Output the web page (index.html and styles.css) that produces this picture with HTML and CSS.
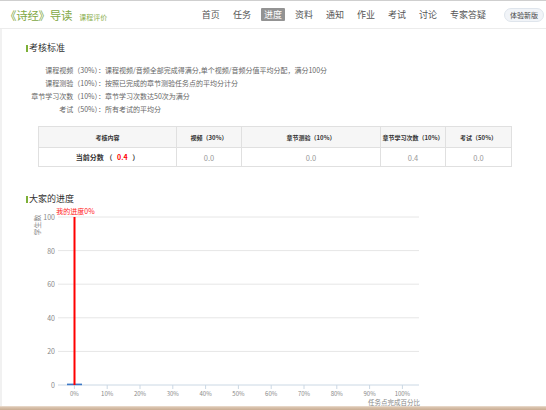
FILE: index.html
```html
<!DOCTYPE html>
<html lang="zh-CN">
<head>
<meta charset="utf-8">
<title>《诗经》导读 - 课程评价</title>
<link rel="stylesheet" href="styles.css">
</head>
<body>
<header class="topbar">
  <div class="brand">
    <span class="brand-title">《诗经》导读</span>
    <span class="brand-sub">课程评价</span>
  </div>
  <nav class="nav">
    <a class="nav-item">首页</a>
    <a class="nav-item">任务</a>
    <a class="nav-item active">进度</a>
    <a class="nav-item">资料</a>
    <a class="nav-item">通知</a>
    <a class="nav-item">作业</a>
    <a class="nav-item">考试</a>
    <a class="nav-item">讨论</a>
    <a class="nav-item">专家答疑</a>
    <span class="pill">体验新版</span>
  </nav>
</header>

<main class="panel">
  <section class="block">
    <h2 class="sec-title">考核标准</h2>
    <div class="rules">
      <span class="rule-label">课程视频（30%）：</span><span class="rule-text">课程视频/音频全部完成得满分,单个视频/音频分值平均分配，满分100分</span>
      <span class="rule-label">课程测验（10%）：</span><span class="rule-text">按照已完成的章节测验任务点的平均分计分</span>
      <span class="rule-label">章节学习次数（10%）：</span><span class="rule-text">章节学习次数达50次为满分</span>
      <span class="rule-label">考试（50%）：</span><span class="rule-text">所有考试的平均分</span>
    </div>
    <table class="score">
      <colgroup>
        <col class="c1"><col class="c2"><col class="c3"><col class="c4"><col class="c5">
      </colgroup>
      <thead>
        <tr><th>考核内容</th><th>视频（30%）</th><th>章节测验（10%）</th><th>章节学习次数（10%）</th><th>考试（50%）</th></tr>
      </thead>
      <tbody>
        <tr><td class="cur">当前分数 （ <em>0.4</em> ）</td><td>0.0</td><td>0.0</td><td>0.4</td><td>0.0</td></tr>
      </tbody>
    </table>
  </section>

  <section class="block block-chart">
    <h2 class="sec-title">大家的进度</h2>
    <svg class="chart" width="420" height="200" viewBox="26 206 420 200">
      <g class="grid">
        <line x1="58" y1="218" x2="419" y2="218"/>
        <line x1="58" y1="251.6" x2="419" y2="251.6"/>
        <line x1="58" y1="285.2" x2="419" y2="285.2"/>
        <line x1="58" y1="318.8" x2="419" y2="318.8"/>
        <line x1="58" y1="352.4" x2="419" y2="352.4"/>
      </g>
      <g class="ylab">
        <text x="55" y="218">100</text>
        <text x="55" y="251.6">80</text>
        <text x="55" y="285.2">60</text>
        <text x="55" y="318.8">40</text>
        <text x="55" y="352.4">20</text>
        <text x="55" y="386">0</text>
      </g>
      <text class="yname" transform="translate(37 226) rotate(-90)">学生数</text>
      <line class="axis" x1="58" y1="386" x2="419" y2="386"/>
      <g class="ticks">
        <line x1="74.4" y1="386" x2="74.4" y2="390"/>
        <line x1="107.2" y1="386" x2="107.2" y2="390"/>
        <line x1="140" y1="386" x2="140" y2="390"/>
        <line x1="172.8" y1="386" x2="172.8" y2="390"/>
        <line x1="205.6" y1="386" x2="205.6" y2="390"/>
        <line x1="238.4" y1="386" x2="238.4" y2="390"/>
        <line x1="271.2" y1="386" x2="271.2" y2="390"/>
        <line x1="304" y1="386" x2="304" y2="390"/>
        <line x1="336.8" y1="386" x2="336.8" y2="390"/>
        <line x1="369.6" y1="386" x2="369.6" y2="390"/>
        <line x1="402.4" y1="386" x2="402.4" y2="390"/>
      </g>
      <g class="xlab">
        <text x="74.4" y="394">0%</text>
        <text x="107.2" y="394">10%</text>
        <text x="140" y="394">20%</text>
        <text x="172.8" y="394">30%</text>
        <text x="205.6" y="394">40%</text>
        <text x="238.4" y="394">50%</text>
        <text x="271.2" y="394">60%</text>
        <text x="304" y="394">70%</text>
        <text x="336.8" y="394">80%</text>
        <text x="369.6" y="394">90%</text>
        <text x="402.4" y="394">100%</text>
      </g>
      <text class="xname" x="420" y="402.5">任务点完成百分比</text>
      <rect class="bar" x="67" y="384.6" width="15" height="1.6"/>
      <rect class="mine" x="73.5" y="218" width="2" height="168"/>
      <text class="mine-label" x="75.5" y="212">我的进度0%</text>
    </svg>
  </section>
</main>
<div class="footer-strip"></div>
</body>
</html>
```

FILE: styles.css
```css
html, body {
  margin: 0;
  padding: 0;
}

body {
  width: 546px;
  height: 410px;
  overflow: hidden;
  background: #f1f1f1;
  font-family: "Noto Sans CJK SC", "Noto Sans", sans-serif;
  color: #333;
  display: flex;
  flex-direction: column;
}

/* ---- top bar ---- */
.topbar {
  flex: none;
  height: 27px;
  border-top: 1px solid #cfcfcf;
  border-bottom: 1px solid #ececec;
  background: #fff;
  display: flex;
  align-items: center;
  justify-content: space-between;
  padding: 0 2px 0 5px;
}

.brand {
  display: flex;
  align-items: baseline;
  gap: 7px;
}

.brand-title {
  font-size: 11.5px;
  color: #82a844;
  letter-spacing: -0.3px;
}

.brand-sub {
  font-size: 7px;
  color: #8aae4e;
}

.nav {
  display: flex;
  align-items: center;
  gap: 7px;
}

.nav-item {
  font-size: 9px;
  line-height: 13px;
  padding: 0 3px;
  color: #555;
  border-radius: 1px;
}

.nav-item.active {
  background: #939393;
  color: #fff;
}

.pill {
  margin-left: 8px;
  height: 14px;
  line-height: 12px;
  padding: 0 5px;
  font-size: 7px;
  white-space: nowrap;
  color: #444;
  background: #f1f4f8;
  border: 1px solid #dfe5ec;
  border-radius: 8px;
  box-sizing: border-box;
}

/* ---- content panel ---- */
.panel {
  flex: 1;
  min-height: 0;
  overflow: hidden;
  margin-left: 2px;
  background: #fff;
  padding: 13px 0 0 24px;
}

.sec-title {
  margin: 0;
  display: flex;
  align-items: center;
  gap: 1px;
  font-size: 9px;
  line-height: 12px;
  font-weight: normal;
  color: #333;
}

.sec-title::before {
  content: "";
  width: 2px;
  height: 7px;
  background: #7cb038;
}

/* criteria list */
.rules {
  display: grid;
  grid-template-columns: 79px auto;
  margin-top: 10px;
  font-size: 7px;
  line-height: 13px;
  color: #666;
}

.rule-label {
  text-align: right;
  white-space: nowrap;
}

.rule-text {
  white-space: nowrap;
}

/* score table */
.score {
  margin: 10px 0 0 12px;
  border-collapse: collapse;
  table-layout: fixed;
  width: 473px;
  font-size: 7px;
  text-align: center;
}

.score .c1 { width: 138px; }
.score .c2 { width: 65px; }
.score .c3 { width: 139px; }
.score .c4 { width: 65px; }
.score .c5 { width: 66px; }

.score th,
.score td {
  border: 1px solid #e0e0e0;
  padding: 0;
  white-space: nowrap;
}

.score th {
  height: 20px;
  background: #f6f6f6;
  font-weight: bold;
  font-size: 6px;
  color: #333;
}

.score td {
  height: 18px;
  color: #999;
  font-size: 7.5px;
}

.score td.cur {
  font-weight: bold;
  color: #333;
  font-size: 7px;
}

.score td.cur em {
  font-style: normal;
  color: #f00;
  padding: 0 3px;
}

/* progress chart */
.block-chart {
  margin-top: 26px;
}

.chart {
  display: block;
  overflow: visible;
  font-family: "Noto Sans CJK SC", "Noto Sans", sans-serif;
}

.chart .grid line {
  stroke: #e6e6e6;
  stroke-width: 1;
}

.chart .axis,
.chart .ticks line {
  stroke: #cbd8e4;
  stroke-width: 1;
}

.chart .ylab text {
  font-size: 7px;
  fill: #888;
  text-anchor: end;
  dominant-baseline: central;
}

.chart .xlab text {
  font-size: 6px;
  fill: #888;
  text-anchor: middle;
  dominant-baseline: central;
}

.chart .yname,
.chart .xname {
  font-size: 7px;
  fill: #888;
}

.chart .xname {
  font-size: 6.5px;
}

.chart .yname {
  text-anchor: middle;
  dominant-baseline: central;
}

.chart .xname {
  text-anchor: end;
  dominant-baseline: central;
}

.chart .bar {
  fill: #3d78c6;
}

.chart .mine {
  fill: #ff0000;
}

.chart .mine-label {
  font-size: 7px;
  fill: #f22;
  text-anchor: middle;
  dominant-baseline: central;
}

/* bottom edge of the next band */
.footer-strip {
  flex: none;
  height: 4px;
  background: linear-gradient(#efe4da 0, #dcc6b1 1px, #c9ad93 100%);
}
```
